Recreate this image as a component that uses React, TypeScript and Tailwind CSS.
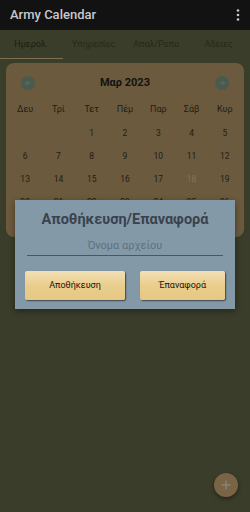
import React from "react";

const weekdays = ["Δευ", "Τρί", "Τετ", "Πέμ", "Παρ", "Σάβ", "Κυρ"];
const days: (number | null)[] = [
  null, null, 1, 2, 3, 4, 5,
  6, 7, 8, 9, 10, 11, 12,
  13, 14, 15, 16, 17, 18, 19,
  20, 21, 22, 23, 24, 25, 26,
];

export default function App() {
  return (
    <div
      className="relative w-[250px] h-[512px] overflow-hidden bg-[#3a3d29]"
      style={{ fontFamily: "Roboto, 'Noto Sans', sans-serif" }}
    >
      {/* top bar */}
      <div className="h-[30px] bg-[#121212] flex items-center justify-between pl-[10px] pr-[10px]">
        <span className="text-[13px] font-medium text-[#c8c8c8]">Army Calendar</span>
        <svg width="4" height="12" viewBox="0 0 4 12">
          <circle cx="2" cy="1.5" r="1.3" fill="#c8c8c8" />
          <circle cx="2" cy="6" r="1.3" fill="#c8c8c8" />
          <circle cx="2" cy="10.5" r="1.3" fill="#c8c8c8" />
        </svg>
      </div>
      {/* tabs */}
      <div className="h-[29px] grid grid-cols-4 text-[9px] text-[#1c1e12]">
        <div className="relative flex items-center justify-center">
          <span>Ημερολ.</span>
          <div className="absolute left-0 right-0 bottom-0 h-[1.5px] bg-[#7d7052]" />
        </div>
        <div className="flex items-center justify-center text-[#262919]">Υπηρεσίες</div>
        <div className="flex items-center justify-center text-[#262919]">Απαλ/Ρεπο</div>
        <div className="flex items-center justify-center text-[#262919]">Αδειες</div>
      </div>
      {/* calendar card */}
      <div className="mx-[6px] mt-[4px] h-[174px] rounded-[8px] bg-[#6b5a3d] px-[2.5px] pt-[13px] overflow-hidden">
        <div className="h-[14px] flex items-center justify-between px-[12px]">
          <div className="w-[14px] h-[14px] rounded-full bg-[#4b5a4f] flex items-center justify-center">
            <svg width="8" height="8" viewBox="0 0 8 8">
              <path d="M6.5 4H1.5M3.8 1.7L1.5 4l2.3 2.3" stroke="#5f6e66" strokeWidth="1" fill="none" />
            </svg>
          </div>
          <span className="text-[11px] font-bold text-[#141210]">Μαρ 2023</span>
          <div className="w-[14px] h-[14px] rounded-full bg-[#4b5a4f] flex items-center justify-center">
            <svg width="8" height="8" viewBox="0 0 8 8">
              <path d="M1.5 4H6.5M4.2 1.7L6.5 4 4.2 6.3" stroke="#5f6e66" strokeWidth="1" fill="none" />
            </svg>
          </div>
        </div>
        <div className="mt-[8.5px] grid grid-cols-7">
          {weekdays.map((w) => (
            <div key={w} className="h-[23px] flex items-center justify-center text-[9px] text-[#221d14]">
              {w}
            </div>
          ))}
          {days.map((d, i) => (
            <div
              key={i}
              className={`h-[23px] flex items-center justify-center text-[8.5px] ${
                d === 18 ? "text-[#80745f]" : "text-[#221d14]"
              }`}
            >
              {d ?? ""}
            </div>
          ))}
        </div>
      </div>
      {/* dialog */}
      <div className="absolute left-[15px] top-[200px] w-[220px] h-[109px] bg-[#8499a8] shadow-[0_2px_6px_rgba(0,0,0,0.4)] flex flex-col items-center">
        <div className="mt-[9px] text-[14.5px] font-bold text-[#39424e] leading-[22px]">Αποθήκευση/Επαναφορά</div>
        <div className="mt-[7px] w-[196px] h-[18px] border-b border-[#4b5662] flex items-center justify-center text-[11px] text-[#5f707e]">
          Όνομα αρχείου
        </div>
        <div className="mt-[15px] w-[200px] flex justify-between">
          <div className="w-[100px] h-[29px] rounded-[2px] bg-gradient-to-b from-[#f3e0b6] via-[#e9cd8c] to-[#e6c883] shadow-[1px_1px_1.5px_rgba(0,0,0,0.55)] flex items-center justify-center text-[9px] text-[#15130e]">
            Αποθήκευση
          </div>
          <div className="w-[85px] h-[29px] rounded-[2px] bg-gradient-to-b from-[#f3e0b6] via-[#e9cd8c] to-[#e6c883] shadow-[1px_1px_1.5px_rgba(0,0,0,0.55)] flex items-center justify-center text-[9px] text-[#15130e]">
            Έπαναφορά
          </div>
        </div>
      </div>
      {/* FAB */}
      <div className="absolute left-[214px] top-[473px] w-[24px] h-[24px] rounded-full bg-[#7a6446] shadow-[0_2px_4px_rgba(0,0,0,0.4)] flex items-center justify-center">
        <svg width="10" height="10" viewBox="0 0 10 10">
          <path d="M5 0.5V9.5M0.5 5H9.5" stroke="#8c8f8d" strokeWidth="1" />
        </svg>
      </div>
    </div>
  );
}
